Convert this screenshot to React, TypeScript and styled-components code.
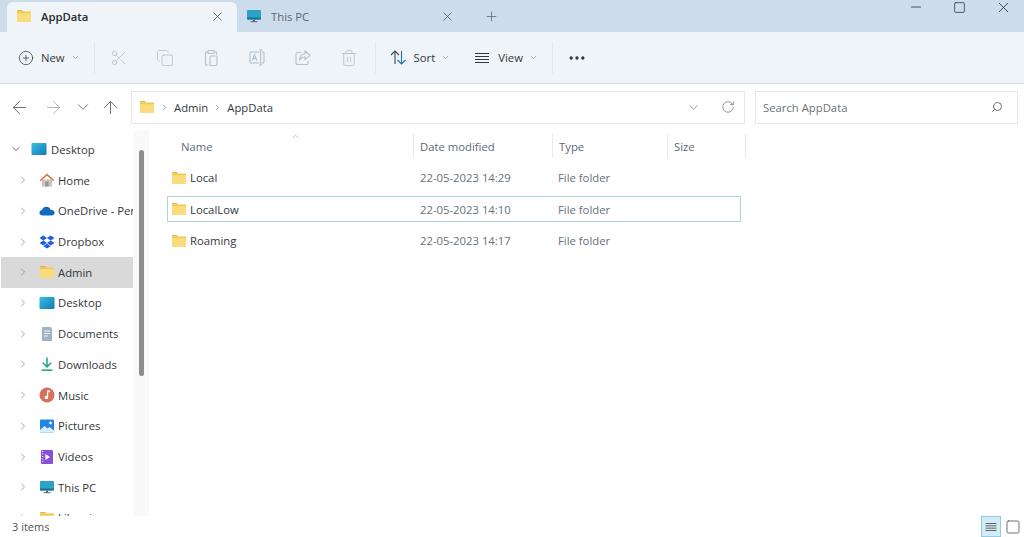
import React from "react"
import styled, { createGlobalStyle } from "styled-components"
import {
  ArrowLeft, ArrowRight, ArrowUp, ChevronDown, ChevronRight, ChevronUp, CirclePlus,
  Copy, Ellipsis, Minus, Plus, RotateCw, Scissors, Search, Square, Trash2, X,
} from "lucide-react"

const GlobalStyle = createGlobalStyle`
  html, body { margin: 0; padding: 0; background: #fff; overflow: hidden; }
  body { font-family: "Open Sans", "Noto Sans", "Liberation Sans", sans-serif; color: #2b2b2b; }
  #root { width: 1024px; height: 537px; }
`

const Window = styled.div`
  width: 1024px;
  height: 537px;
  display: flex;
  flex-direction: column;
  overflow: hidden;
  font-size: 11.3px;
`

/* title bar + tabs */
const TitleBar = styled.div`
  height: 32px;
  flex-shrink: 0;
  background: #cddcea;
  display: flex;
  align-items: flex-end;
  padding-left: 7px;
`

const Tab = styled.div<{ $active?: boolean }>`
  width: ${({ $active }) => ($active ? 230 : 228)}px;
  height: 30px;
  box-sizing: border-box;
  display: flex;
  align-items: center;
  gap: 9px;
  padding: 0 ${({ $active }) => ($active ? 12 : 10)}px 2px 9px;
  border-radius: 6px 6px 0 0;
  background: ${({ $active }) => ($active ? "#eff4f8" : "transparent")};
  font-weight: ${({ $active }) => ($active ? 600 : 400)};
  color: ${({ $active }) => ($active ? "#2b2b2b" : "#5c6670")};
`

const TabLabel = styled.span`
  flex: 1;
`

const NewTab = styled.div`
  width: 52px;
  height: 30px;
  display: flex;
  align-items: center;
  justify-content: center;
  padding-bottom: 2px;
  box-sizing: border-box;
  color: #5a6168;
`

const WindowControls = styled.div`
  margin-left: auto;
  align-self: flex-start;
  display: flex;
  align-items: center;
  gap: 29px;
  padding: 0 12px 0 0;
  height: 14px;
  color: #2c3238;
`

/* command bar */
const CommandBar = styled.div`
  height: 52px;
  flex-shrink: 0;
  box-sizing: border-box;
  background: #eff4f8;
  border-bottom: 1px solid #d3d8dc;
  display: flex;
  align-items: center;
  padding-left: 18px;
`

const CommandGroup = styled.div`
  display: flex;
  align-items: center;
  gap: 7px;
  color: #33383d;
`

const Chevron = styled(ChevronDown)`
  color: #8a9299;
  margin-left: -1px;
`

const Divider = styled.div`
  width: 1px;
  height: 32px;
  background: #e2e7eb;
  margin: 0 14px 0 14px;
`

const DisabledIcons = styled.div`
  display: flex;
  align-items: center;
  gap: 28px;
  margin-left: 1px;
  margin-right: 3px;
  color: #b4c0ca;
`

const ViewGroup = styled(CommandGroup)`
  margin-left: 23px;
`

/* address row */
const AddressRow = styled.div`
  height: 46px;
  flex-shrink: 0;
  display: flex;
  align-items: center;
  padding: 0 6px 0 3px;
  box-sizing: border-box;
`

const NavButtons = styled.div`
  width: 128px;
  display: grid;
  grid-template-columns: 33px 34px 26px 28px;
  align-items: center;
  justify-items: center;
  color: #565b60;
`

const NavDisabled = styled.span`
  display: flex;
  color: #a3aab0;
`

const FieldBox = styled.div`
  height: 33px;
  box-sizing: border-box;
  background: #fff;
  border: 1px solid #e4e6e8;
  display: flex;
  align-items: center;
`

const AddressBox = styled(FieldBox)`
  width: 614px;
  padding: 0 9px 0 7px;
  gap: 5px;
  margin-right: 10px;
`

const Crumb = styled.span`
  color: #34383c;
`

const SearchBox = styled(FieldBox)`
  flex: 1;
  padding: 0 14px 0 7px;
  justify-content: space-between;
  color: #6d7276;
`

const MirroredSearch = styled(Search)`
  transform: scaleX(-1);
  color: #444;
`

const AddressTools = styled.div`
  margin-left: auto;
  display: flex;
  align-items: center;
  gap: 20px;
  color: #6b7075;
`

/* body */
const Body = styled.div`
  flex: 1;
  min-height: 0;
  display: flex;
`

const Sidebar = styled.nav`
  width: 134px;
  flex-shrink: 0;
  overflow: hidden;
  padding-top: 4px;
  box-sizing: border-box;
`

const TreeRow = styled.div<{ $root?: boolean; $selected?: boolean }>`
  height: 30.72px;
  margin: 0 1px;
  display: flex;
  align-items: center;
  gap: 3px;
  white-space: nowrap;
  overflow: hidden;
  padding-left: ${({ $root }) => ($root ? 9 : 16)}px;
  background: ${({ $selected }) => ($selected ? "#d9d9d9" : "transparent")};
  color: #33373b;
`

const TreeChevron = styled.span`
  width: 12px;
  display: flex;
  color: #777;
  flex-shrink: 0;
`

const TreeIcon = styled.span<{ $root?: boolean }>`
  width: 16px;
  height: 16px;
  margin: 0 ${({ $root }) => ($root ? 1 : 0)}px 0 ${({ $root }) => ($root ? 6 : 7)}px;
  flex-shrink: 0;
  display: flex;
`

const ScrollTrack = styled.div`
  width: 15px;
  flex-shrink: 0;
  background: #f9f9f9;
  padding: 20px 0 0 5px;
  box-sizing: border-box;
`

const ScrollThumb = styled.div`
  width: 5px;
  height: 226px;
  background: #8d8d8d;
  border-radius: 3px;
`

const Main = styled.main`
  flex: 1;
  min-width: 0;
`

const HeaderRow = styled.div`
  position: relative;
  display: grid;
  grid-template-columns: 265px 139px 115px 78px;
  height: 24px;
  margin-top: 4px;
  color: #5d6a75;
`

const HeaderCell = styled.div`
  display: flex;
  align-items: center;
  padding-left: 6px;
  border-right: 1px solid #e7eaec;
  &:first-child { padding-left: 32px; }
`

const SortCaret = styled(ChevronUp)`
  position: absolute;
  left: 141px;
  top: -3px;
  color: #8d959c;
`

const FileList = styled.div`
  margin-top: 6.5px;
  padding-left: 18px;
  width: 574px;
`

const FileRow = styled.div<{ $focused?: boolean }>`
  height: 26px;
  margin: 0 0 5.5px;
  box-sizing: border-box;
  display: grid;
  grid-template-columns: 252px 138px 100px;
  align-items: center;
  border: 1px solid ${({ $focused }) => ($focused ? "#aed2e2" : "transparent")};
  color: #33373b;
`

const NameCell = styled.div`
  display: flex;
  align-items: center;
  gap: 3px;
  padding-left: 3px;
`

const MetaCell = styled.div`
  color: #68707a;
`

const StatusBar = styled.footer`
  height: 21px;
  flex-shrink: 0;
  display: flex;
  align-items: center;
  justify-content: space-between;
  padding: 0 1px 0 12px;
  color: #555;
  font-size: 11px;
`

const ViewToggles = styled.div`
  display: flex;
  align-items: center;
  gap: 2px;
`

const ViewToggle = styled.span<{ $active?: boolean }>`
  width: 20px;
  height: 21px;
  box-sizing: border-box;
  display: flex;
  align-items: center;
  justify-content: center;
  color: #3c3c3c;
  background: ${({ $active }) => ($active ? "#d3ebf5" : "transparent")};
  border: 1px solid ${({ $active }) => ($active ? "#93cbe3" : "transparent")};
`

/* drawn icons */
const FolderIcon = ({ size = 16 }: { size?: number }) => (
  <svg width={size} height={size} viewBox="0 0 16 16">
    <path d="M1 3.2C1 2.5 1.5 2 2.2 2h3.6l1.6 1.6H1z" fill="#e8b23a" />
    <path d="M1 3.4h13.8c.1 0 .2.1.2.2V13c0 .6-.5 1-1 1H2c-.6 0-1-.4-1-1z" fill="#f2c94f" />
    <path d="M1 5.2h14V13c0 .6-.5 1-1 1H2c-.6 0-1-.4-1-1z" fill="#fbdc7c" />
  </svg>
)

const MonitorIcon = ({ size = 16 }: { size?: number }) => (
  <svg width={size} height={size} viewBox="0 0 16 16">
    <rect x="1" y="2" width="14" height="9.5" rx="1" fill="#2aa3c9" />
    <path d="M1 9.5h14v1c0 .6-.4 1-1 1H2c-.6 0-1-.4-1-1z" fill="#1b6f92" />
    <rect x="7" y="11.5" width="2" height="2" fill="#56646e" />
    <rect x="4.5" y="13.2" width="7" height="1" fill="#56646e" />
  </svg>
)

const DesktopIcon = () => (
  <svg width="16" height="16" viewBox="0 0 16 16">
    <defs>
      <linearGradient id="desk" x1="0" y1="0" x2="1" y2="1">
        <stop offset="0" stopColor="#35c1e0" />
        <stop offset="1" stopColor="#1478b4" />
      </linearGradient>
    </defs>
    <rect x="0.5" y="2" width="15" height="12" rx="1" fill="url(#desk)" />
  </svg>
)

const HomeIcon = () => (
  <svg width="16" height="16" viewBox="0 0 16 16">
    <path d="M3 7.5h10V14a.6.6 0 0 1-.6.6H3.6A.6.6 0 0 1 3 14z" fill="#c9c6c2" />
    <rect x="6.4" y="9.5" width="3.2" height="5.1" fill="#9a9793" />
    <path d="M8 1.6.6 8.2l1 1.1L8 3.7l6.4 5.6 1-1.1z" fill="#d9773b" />
  </svg>
)

const CloudIcon = () => (
  <svg width="16" height="16" viewBox="0 0 16 16">
    <path d="M3.6 12.5C1.8 12.5.4 11.3.4 9.7c0-1.5 1.2-2.7 2.7-2.8C3.7 5 5.4 3.8 7.4 3.8c2 0 3.7 1.2 4.2 3 2.2 0 4 1.3 4 3 0 1.5-1.3 2.7-3 2.7z" fill="#0f6cbd" />
  </svg>
)

const DropboxIcon = () => (
  <svg width="16" height="16" viewBox="0 0 16 16" fill="#1f5fe0">
    <path d="M4.3 1.5.5 4l3.8 2.4L8 4zM11.7 1.5 8 4l3.7 2.4L15.5 4zM.5 8.9l3.8 2.5L8 8.9 4.3 6.4zM11.7 6.4 8 8.9l3.7 2.5 3.8-2.5zM4.3 12.2 8 14.6l3.7-2.4L8 9.8z" />
  </svg>
)

const DocumentsIcon = () => (
  <svg width="16" height="16" viewBox="0 0 16 16">
    <path d="M3 1h8.5L13 2.5V15H3z" fill="#9fb3c8" />
    <path d="M5 5h6M5 7.5h6M5 10h4" stroke="#f3f6f9" strokeWidth="1" />
  </svg>
)

const DownloadsIcon = () => (
  <svg width="16" height="16" viewBox="0 0 16 16" fill="none" stroke="#1ba784" strokeWidth="1.5">
    <path d="M8 1.5v9M3.8 6.8 8 11l4.2-4.2" />
    <path d="M2.5 14.2h11" />
  </svg>
)

const MusicIcon = () => (
  <svg width="16" height="16" viewBox="0 0 16 16">
    <circle cx="8" cy="8" r="7.5" fill="#d9705a" />
    <path d="M8 3.5h3v1.8H9.2v5.2a1.8 1.8 0 1 1-1.2-1.7z" fill="#fff" />
  </svg>
)

const PicturesIcon = () => (
  <svg width="16" height="16" viewBox="0 0 16 16">
    <rect x="1" y="1.5" width="14" height="13" rx="1" fill="#1f87e0" />
    <path d="M1 14.5V12l4.5-4 3 2.6 2-1.6 4.5 3.6v1.9z" fill="#d8eefc" />
    <circle cx="11.5" cy="5" r="1.4" fill="#fff" />
  </svg>
)

const VideosIcon = () => (
  <svg width="16" height="16" viewBox="0 0 16 16">
    <rect x="2" y="1" width="12" height="14" rx="1" fill="#8a4fd8" />
    <path d="M6.4 5v6l4.6-3z" fill="#fff" />
    <path d="M3 2.5h1.4M3 5h1.4M3 7.5h1.4M3 10h1.4M3 12.5h1.4" stroke="#e8dcfa" strokeWidth="1" />
  </svg>
)

const PasteIcon = () => (
  <svg width="18" height="18" viewBox="0 0 18 18" fill="none" stroke="currentColor" strokeWidth="1.1">
    <path d="M6 3H3.5v13h3M12 3h2.5v3" />
    <rect x="6" y="1.5" width="6" height="3" rx="0.8" />
    <rect x="8" y="7" width="7" height="9.5" rx="1" />
  </svg>
)

const RenameIcon = () => (
  <svg width="18" height="18" viewBox="0 0 18 18" fill="none" stroke="currentColor" strokeWidth="1.1">
    <path d="M11.5 3H3a1 1 0 0 0-1 1v9a1 1 0 0 0 1 1h8.5M14 3h1a1 1 0 0 1 1 1v9a1 1 0 0 1-1 1h-1" />
    <path d="M12.7 1v15M11.2 1h3M11.2 16h3" />
    <path d="m4.2 11.5 2.3-6 2.3 6M5 9.6h3" />
  </svg>
)

const ShareIcon = () => (
  <svg width="18" height="18" viewBox="0 0 18 18" fill="none" stroke="currentColor" strokeWidth="1.1">
    <path d="M7 3.5H3.5A1.5 1.5 0 0 0 2 5v9a1.5 1.5 0 0 0 1.5 1.5h9A1.5 1.5 0 0 0 14 14v-2" />
    <path d="M11 2l5 4.3-5 4.3V8c-2.6 0-4.400 1-5.500 3.400C5.700 7.600 7.600 5 11 4.700z" />
  </svg>
)

const SortIcon = () => (
  <svg width="17" height="17" viewBox="0 0 17 17" fill="none" strokeWidth="1.1">
    <path d="M5 15V2M1 6l4-4 4 4" stroke="#3f4c58" />
    <path d="M11.500 2v13M7.500 11l4 4 4-4" stroke="#1f6fb5" />
  </svg>
)

const LinesIcon = ({ size = 18 }: { size?: number }) => (
  <svg width={size} height={size} viewBox="0 0 18 18" stroke="currentColor" strokeWidth="1">
    <path d="M2 4.500h14M2 7.500h14M2 10.500h14M2 13.500h14" />
  </svg>
)

const sidebarItems: { label: string; icon: React.ReactNode; selected?: boolean }[] = [
  { label: "Home", icon: <HomeIcon /> },
  { label: "OneDrive - Personal", icon: <CloudIcon /> },
  { label: "Dropbox", icon: <DropboxIcon /> },
  { label: "Admin", icon: <FolderIcon />, selected: true },
  { label: "Desktop", icon: <DesktopIcon /> },
  { label: "Documents", icon: <DocumentsIcon /> },
  { label: "Downloads", icon: <DownloadsIcon /> },
  { label: "Music", icon: <MusicIcon /> },
  { label: "Pictures", icon: <PicturesIcon /> },
  { label: "Videos", icon: <VideosIcon /> },
  { label: "This PC", icon: <MonitorIcon /> },
  { label: "Libraries", icon: <FolderIcon /> },
]

const files = [
  { name: "Local", date: "22-05-2023 14:29" },
  { name: "LocalLow", date: "22-05-2023 14:10", focused: true },
  { name: "Roaming", date: "22-05-2023 14:17" },
]

export default function App() {
  return (
    <Window>
      <GlobalStyle />
      <TitleBar>
        <Tab $active>
          <FolderIcon />
          <TabLabel>AppData</TabLabel>
          <X size={15} strokeWidth={1.2} color="#444" />
        </Tab>
        <Tab>
          <MonitorIcon />
          <TabLabel>This PC</TabLabel>
          <X size={15} strokeWidth={1.2} color="#555" />
        </Tab>
        <NewTab>
          <Plus size={15} strokeWidth={1.2} />
        </NewTab>
        <WindowControls>
          <Minus size={16} strokeWidth={1.2} />
          <Square size={13} strokeWidth={1.4} />
          <X size={17} strokeWidth={1.2} />
        </WindowControls>
      </TitleBar>

      <CommandBar>
        <CommandGroup>
          <CirclePlus size={16} strokeWidth={1.1} />
          <span>New</span>
          <Chevron size={9} />
        </CommandGroup>
        <Divider />
        <DisabledIcons>
          <Scissors size={18} strokeWidth={1.1} />
          <Copy size={18} strokeWidth={1.1} />
          <PasteIcon />
          <RenameIcon />
          <ShareIcon />
          <Trash2 size={18} strokeWidth={1.1} />
        </DisabledIcons>
        <Divider />
        <CommandGroup>
          <SortIcon />
          <span>Sort</span>
          <Chevron size={9} />
        </CommandGroup>
        <ViewGroup>
          <LinesIcon />
          <span>View</span>
          <Chevron size={9} />
        </ViewGroup>
        <Divider />
        <CommandGroup>
          <Ellipsis size={20} strokeWidth={2} />
        </CommandGroup>
      </CommandBar>

      <AddressRow>
        <NavButtons>
          <ArrowLeft size={21} strokeWidth={1} />
          <NavDisabled>
            <ArrowRight size={21} strokeWidth={1} />
          </NavDisabled>
          <ChevronDown size={18} strokeWidth={1.1} />
          <ArrowUp size={21} strokeWidth={1} />
        </NavButtons>
        <AddressBox>
          <FolderIcon />
          <ChevronRight size={9} strokeWidth={1.5} color="#666" />
          <Crumb>Admin</Crumb>
          <ChevronRight size={9} strokeWidth={1.5} color="#666" />
          <Crumb>AppData</Crumb>
          <AddressTools>
            <ChevronDown size={15} strokeWidth={1.1} />
            <RotateCw size={14} strokeWidth={1.2} />
          </AddressTools>
        </AddressBox>
        <SearchBox>
          <span>Search AppData</span>
          <MirroredSearch size={12} strokeWidth={1.5} />
        </SearchBox>
      </AddressRow>

      <Body>
        <Sidebar>
          <TreeRow $root>
            <TreeChevron>
              <ChevronDown size={12} strokeWidth={1.6} color="#333" />
            </TreeChevron>
            <TreeIcon $root>
              <DesktopIcon />
            </TreeIcon>
            Desktop
          </TreeRow>
          {sidebarItems.map(item => (
            <TreeRow key={item.label} $selected={item.selected}>
              <TreeChevron>
                <ChevronRight size={12} strokeWidth={1.3} />
              </TreeChevron>
              <TreeIcon>{item.icon}</TreeIcon>
              {item.label}
            </TreeRow>
          ))}
        </Sidebar>
        <ScrollTrack>
          <ScrollThumb />
        </ScrollTrack>
        <Main>
          <HeaderRow>
            <HeaderCell>Name</HeaderCell>
            <HeaderCell>Date modified</HeaderCell>
            <HeaderCell>Type</HeaderCell>
            <HeaderCell>Size</HeaderCell>
            <SortCaret size={11} strokeWidth={1.2} />
          </HeaderRow>
          <FileList>
            {files.map(file => (
              <FileRow key={file.name} $focused={file.focused}>
                <NameCell>
                  <FolderIcon />
                  {file.name}
                </NameCell>
                <MetaCell>{file.date}</MetaCell>
                <MetaCell>File folder</MetaCell>
              </FileRow>
            ))}
          </FileList>
        </Main>
      </Body>

      <StatusBar>
        <span>3 items</span>
        <ViewToggles>
          <ViewToggle $active>
            <LinesIcon size={14} />
          </ViewToggle>
          <ViewToggle>
            <Square size={16} strokeWidth={1.1} />
          </ViewToggle>
        </ViewToggles>
      </StatusBar>
    </Window>
  )
}
